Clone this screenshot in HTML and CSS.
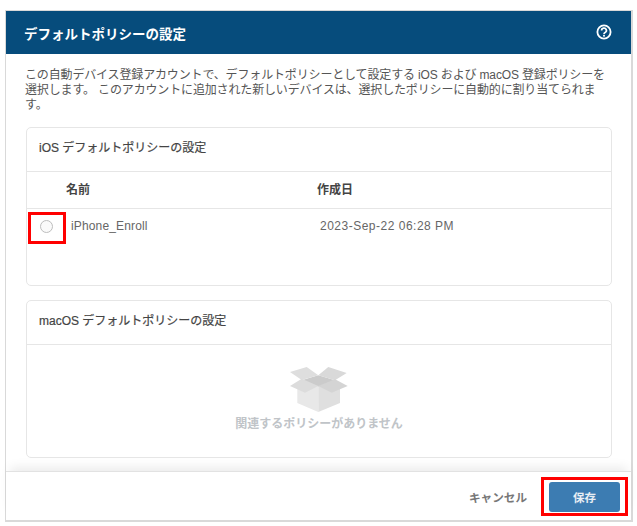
FILE: index.html
```html
<!DOCTYPE html>
<html lang="ja">
<head>
<meta charset="utf-8">
<title>デフォルトポリシーの設定</title>
<link rel="stylesheet" href="styles.css">
</head>
<body>
<div class="dialog">
  <header class="dlg-head">
    <h1 class="dlg-title">デフォルトポリシーの設定</h1>
    <svg class="help" width="16" height="16" viewBox="0 0 16 16" aria-hidden="true">
      <circle cx="8" cy="8" r="6.6" fill="none" stroke="#fff" stroke-width="1.8"/>
      <path d="M5.6 6.5a2.4 2.3 0 1 1 3.6 1.9c-.8.5-1.2.8-1.2 1.6" fill="none" stroke="#fff" stroke-width="1.7"/>
      <rect x="7.1" y="10.8" width="1.8" height="1.8" fill="#fff"/>
    </svg>
  </header>
  <div class="dlg-body">
    <p class="intro">この自動デバイス登録アカウントで、デフォルトポリシーとして設定する iOS および macOS 登録ポリシーを選択します。 このアカウントに追加された新しいデバイスは、選択したポリシーに自動的に割り当てられます。</p>
    <section class="card card-ios">
      <h2 class="card-title">iOS デフォルトポリシーの設定</h2>
      <div class="row row-head">
        <span class="col-check"></span>
        <span class="col-name">名前</span>
        <span class="col-date">作成日</span>
      </div>
      <div class="row row-item">
        <span class="col-check"><span class="radio"></span></span>
        <span class="col-name">iPhone_Enroll</span>
        <span class="col-date">2023-Sep-22 06:28 PM</span>
      </div>
      <span class="mark mark-radio"></span>
    </section>
    <section class="card card-mac">
      <h2 class="card-title">macOS デフォルトポリシーの設定</h2>
      <div class="empty">
        <svg class="box" width="58" height="45" viewBox="0 0 58 45" aria-hidden="true">
          <path d="M11.7 13.3 28.3 8.3 45 13.3 28.3 20z" fill="#cbcbcb"/>
          <path d="M0 5 16.7 0 28.3 8.3 11.7 13z" fill="#dedede"/>
          <path d="M28.3 8.3 38.3 0 56.7 6 45 13.3z" fill="#d9d9d9"/>
          <path d="M7.3 21 28.3 19V30L28.3 45 7.3 36z" fill="#e8e8e8"/>
          <path d="M50 21 28.3 19V45L50 36z" fill="#dfdfdf"/>
          <path d="M0 19 11.7 11.7 28.3 19 15 25.7z" fill="#dcdcdc"/>
          <path d="M28.3 19 45 12.3 57.7 19 41.7 25.7z" fill="#d4d4d4"/>
        </svg>
        <p class="empty-text">関連するポリシーがありません</p>
      </div>
    </section>
  </div>
  <footer class="dlg-foot">
    <button class="btn-cancel" type="button">キャンセル</button>
    <button class="btn-save" type="button">保存</button>
    <span class="mark mark-save"></span>
  </footer>
</div>
</body>
</html>
```
FILE: styles.css
```css
html, body { margin: 0; padding: 0; background: #fff; }
body {
  width: 637px;
  height: 526px;
  overflow: hidden;
  font-family: "Liberation Sans", "Noto Sans CJK JP", sans-serif;
  color: #555;
}
.dialog {
  box-sizing: border-box;
  width: 628px;
  height: 512px;
  margin: 10px 0 0 5px;
  border-style: solid;
  border-color: #d9d9d9;
  border-width: 1px 2px 2px 1px;
  display: flex;
  flex-direction: column;
  background: #fff;
}
.dlg-head {
  height: 43px;
  flex: none;
  background: #064c7c;
  display: flex;
  align-items: center;
  justify-content: space-between;
  padding: 0 19px 0 18px;
}
.dlg-title { margin: 0; font-size: 13.5px; font-weight: 700; color: #fff; }
.help { margin-top: -2px; }
.dlg-body {
  flex: 1;
  padding: 14px 19px 0 20px;
  display: flex;
  flex-direction: column;
}
.intro {
  margin: 0 4px 14px -1px;
  font-size: 12px;
  line-height: 15px;
  letter-spacing: -0.15px;
  color: #555;
}
.card {
  position: relative;
  box-sizing: border-box;
  border: 1px solid #e6e6e6;
  border-radius: 5px;
  background: #fff;
}
.card-ios { height: 159px; margin-bottom: 14px; }
.card-mac { height: 158px; }
.card-title {
  margin: 0;
  height: 43px;
  line-height: 40px;
  padding-left: 12px;
  font-size: 12px;
  font-weight: 400;
  color: #444;
  border-bottom: 1px solid #e6e6e6;
  -webkit-text-stroke: 0.2px #444;
}
.row { display: flex; align-items: center; }
.row-head {
  height: 37px;
  padding-bottom: 3px;
  box-sizing: border-box;
  font-size: 12px;
  font-weight: 700;
  color: #444;
  border-bottom: 1px solid #e6e6e6;
}
.row-item { height: 34px; font-size: 12px; color: #666; }
.col-check { width: 39px; flex: none; display: flex; justify-content: center; padding-top: 1px; box-sizing: border-box; }
.col-name { width: 251px; flex: none; }
.row-item .col-name { padding-left: 5px; box-sizing: border-box; letter-spacing: 0.15px; }
.row-item .col-date { padding-left: 3px; letter-spacing: 0.5px; }
.radio {
  width: 11px;
  height: 11px;
  border: 1px solid #bdbdbd;
  border-radius: 50%;
  background: #fafafa;
}
.mark { position: absolute; box-sizing: border-box; border: 3px solid #f00; pointer-events: none; }
.mark-radio { left: 1px; top: 84px; width: 38px; height: 32px; }
.empty { display: flex; flex-direction: column; align-items: center; padding-top: 22px; }
.box { display: block; }
.empty-text {
  margin: 2px 0 0;
  font-size: 12px;
  font-weight: 700;
  color: #c0c4c8;
}
.dlg-foot {
  position: relative;
  flex: none;
  height: 49px;
  box-sizing: border-box;
  border-top: 1px solid #e2e2e2;
  box-shadow: 0 -8px 10px -4px rgba(0,0,0,.08);
  display: flex;
  align-items: center;
  justify-content: flex-end;
  padding: 1px 11px 0 0;
  gap: 22px;
}
.btn-cancel {
  border: 0;
  background: none;
  padding: 0;
  font: 700 11.6px "Liberation Sans", "Noto Sans CJK JP", sans-serif;
  color: #777;
}
.btn-save {
  width: 71px;
  height: 30px;
  border: 0;
  border-radius: 3px;
  background: #3c7cb2;
  color: #e8eef4;
  font: 700 11.5px "Liberation Sans", "Noto Sans CJK JP", sans-serif;
}
.mark-save { right: 3px; top: 5px; width: 87px; height: 39px; }
```
